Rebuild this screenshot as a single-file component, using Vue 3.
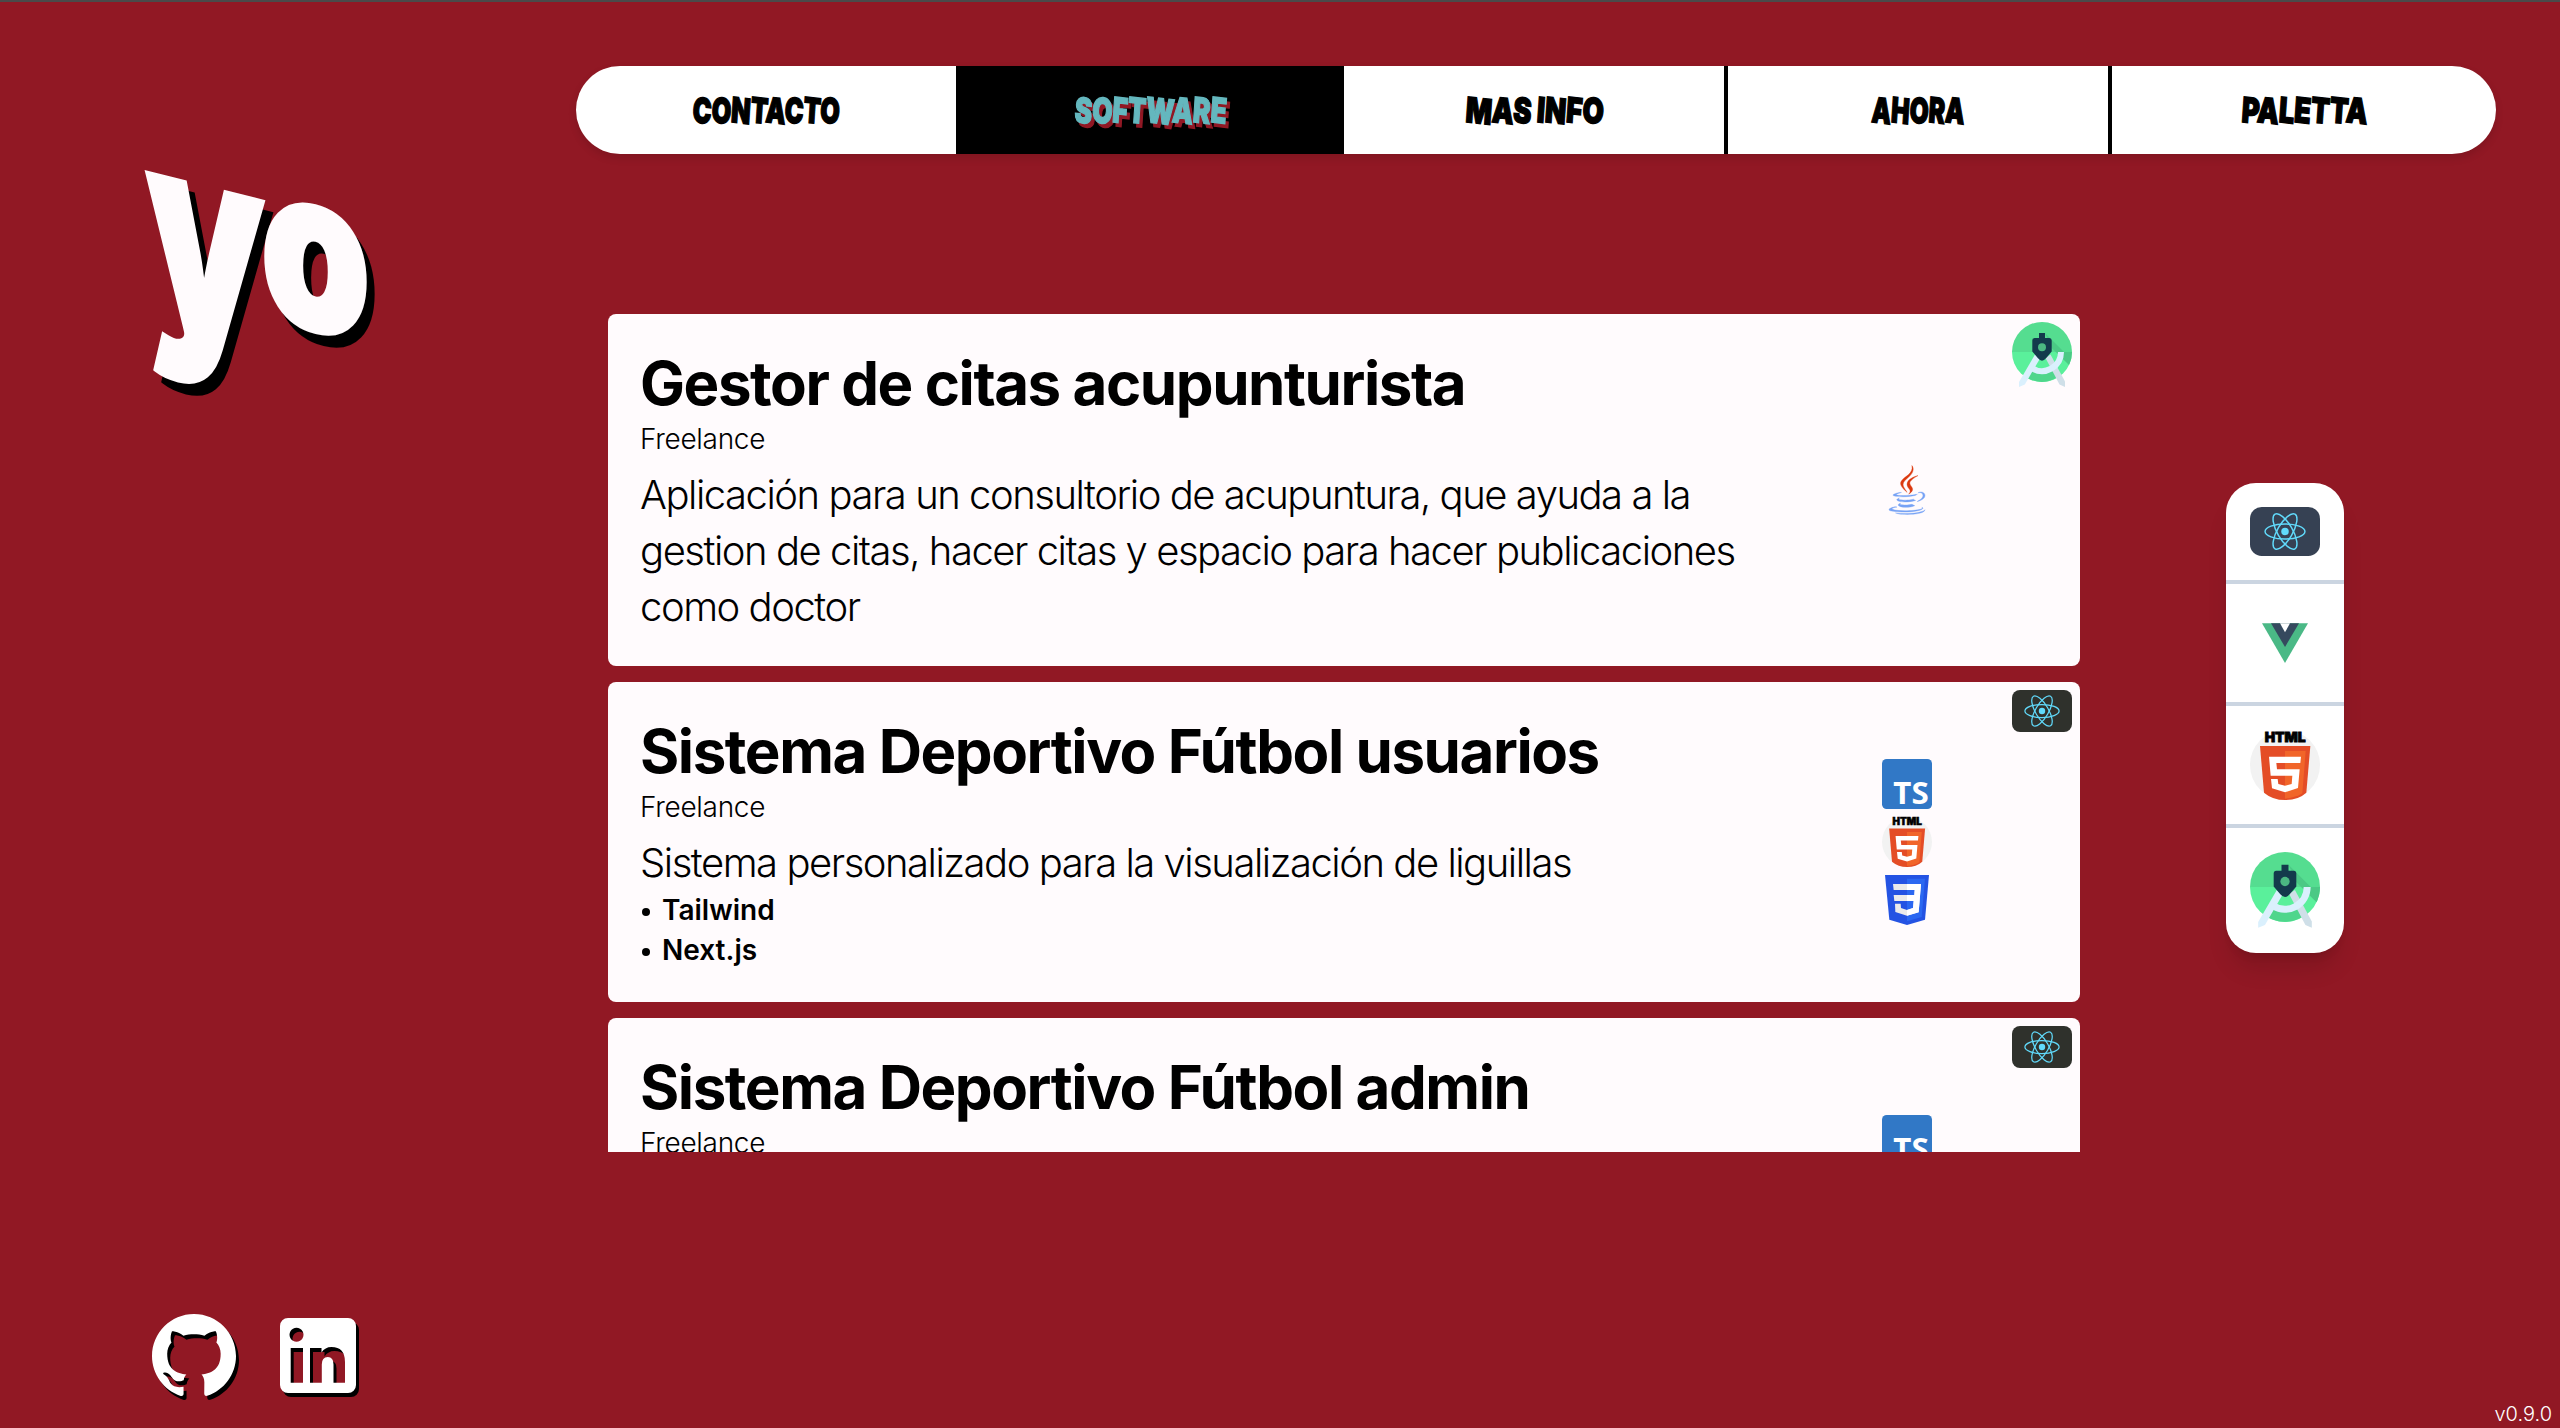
<script setup>
import { h } from 'vue'

const navItems = [
  { label: 'CONTACTO', width: 150 },
  { label: 'SOFTWARE', width: 155, active: true },
  { label: 'MAS INFO', width: 141 },
  { label: 'AHORA', width: 96 },
  { label: 'PALETTA', width: 129 },
]

const projects = [
  {
    title: 'Gestor de citas acupunturista',
    kind: 'Freelance',
    text: ['Aplicación para un consultorio de acupuntura, que ayuda a la', 'gestion de citas, hacer citas y espacio para hacer publicaciones', 'como doctor'],
    tags: [],
    badge: 'android',
    icons: ['java'],
  },
  {
    title: 'Sistema Deportivo Fútbol usuarios',
    kind: 'Freelance',
    text: ['Sistema personalizado para la visualización de liguillas'],
    tags: ['Tailwind', 'Next.js'],
    badge: 'react',
    icons: ['ts', 'html', 'css'],
  },
  {
    title: 'Sistema Deportivo Fútbol admin',
    kind: 'Freelance',
    text: [],
    tags: [],
    badge: 'react',
    icons: ['ts', 'html', 'css'],
    tall: true,
  },
]

const filters = ['react', 'vue', 'html', 'android']

const JAVA_BLUE = 'M47.617 98.12s-4.767 2.774 3.397 3.71c9.892 1.13 14.947.968 25.845-1.092 0 0 2.871 1.795 6.873 3.351-24.439 10.47-55.308-.607-36.115-5.969zM44.629 84.455s-5.348 3.959 2.823 4.805c10.567 1.091 18.91 1.18 33.354-1.6 0 0 1.993 2.025 5.132 3.131-29.542 8.64-62.446.68-41.309-6.336zM102.123 108.229s3.529 2.91-3.888 5.159c-14.102 4.272-58.706 5.56-71.094.171-4.451-1.938 3.899-4.625 6.526-5.192 2.739-.593 4.303-.485 4.303-.485-4.953-3.487-32.013 6.85-13.743 9.815 49.821 8.076 90.817-3.637 77.896-9.468zM49.912 70.294s-22.686 5.389-8.033 7.348c6.188.828 18.518.638 30.011-.326 9.39-.789 18.813-2.474 18.813-2.474s-3.308 1.419-5.704 3.053c-23.042 6.061-67.544 3.238-54.731-2.958 10.832-5.239 19.644-4.643 19.644-4.643zM90.609 93.041c23.421-12.167 12.591-23.86 5.032-22.285-1.848.385-2.677.72-2.677.72s.688-1.079 2-1.543c14.953-5.255 26.451 15.503-4.823 23.725 0-.002.359-.327.468-.617zM52.214 126.021c22.476 1.437 57-.8 57.817-11.436 0 0-1.571 4.032-18.577 7.231-19.186 3.612-42.854 3.191-56.887.874 0 .001 2.875 2.381 17.647 3.331z'
const JAVA_RED = 'M69.802 61.271c6.025 6.935-1.58 13.17-1.58 13.17s15.289-7.891 8.269-17.777c-6.559-9.215-11.587-13.792 15.635-29.58 0 .001-42.731 10.67-22.324 34.187zM76.491 1.587S89.459 14.563 64.188 34.51c-20.266 16.006-4.621 25.13-.007 35.559-11.831-10.673-20.509-20.07-14.688-28.815C58.041 28.42 81.722 22.195 76.491 1.587z'
const CSS_THREE = 'M33 27H117L110 112 75 122 40 111 39 86H56L57 99 75 105 93 99 95 78H37L35 60H97L98 45H35Z'

const path = (d, fill, stroke) => h('path', { d, fill, stroke })

const drawings = {
  android: ['0 0 60 66', () => [
    path('M0 30a30 30 0 0 1 60 0z', '#55dd90'),
    path('M60 30a30 30 0 0 1-60 0z', '#5af09b'),
    path('M33 11 52 30H60a30 30 0 0 1-3 13L39.700 26z', '#4bc985'),
    path('M18 44Q30 50 42 44L48 53.500Q30 66 12 54z', '#4fd68c'),
    path('M33.500 36 38.500 32.500 53 59.500V65L47.500 62.500z', '#cfdfe8'),
    path('M46 30H52A22 22 0 0 1 18.500 48.800L21.300 43.400A16 16 0 0 0 46 30z', '#daf0fd'),
    path('M23 32.500 28 36.500 12.800 62.500 7 65V60z', '#daf0fd'),
    path('M27 11H33V16H37.500Q39.700 16 39.700 18.500V29.500L34 36.300Q30 41 26 36.300L20.300 29.500V18.500Q20.300 16 22.500 16H27z', '#133a4c'),
    h('circle', { cx: 30, cy: 25.3, r: 4, fill: '#4bb882' }),
  ]],
  react: ['0 0 60 42', () => [
    h('rect', { class: 'react-bg', width: 60, height: 42, rx: 8 }),
    ...[0, 60, 120].map((a) => h('ellipse', { cx: 30, cy: 21, rx: 17.1, ry: 6.5, fill: 'none', stroke: '#61dafb', 'stroke-width': 1.25, transform: `rotate(${a} 30 21)` })),
    h('circle', { cx: 30, cy: 21, r: 3.2, fill: '#61dafb' }),
  ]],
  vue: ['0 0 210 210', () => [
    path('M36 46H174L105 165z', '#4ab986'),
    path('M63 46H147L105 117z', '#35495e'),
    path('M90 46H120L105 73z', '#fff'),
  ]],
  html: ['0 0 210 210', () => [
    h('circle', { cx: 105, cy: 105, r: 105, fill: '#f2f2f2' }),
    path('M30 48H181L169 188Q145 210 105 210 68 210 42 188z', '#e44d26'),
    path('M105 63H167L157 190Q137 203 105 206z', '#f16529'),
    path('M57 80H153L151 99H79L81 118H149L144 174 105 187 66 175 63 147H83L85 162 105 167 125 162 127 137H62z', '#fff'),
    h('text', { x: 44, y: 35, class: 'html-word', textLength: 123, lengthAdjust: 'spacingAndGlyphs' }, 'HTML'),
  ]],
  css: ['0 0 150 150', () => [
    path('M9 0H141L129 134 75 150 22 134z', '#2453e3'),
    path('M75 11H129L119 126 75 139z', '#2b68f1'),
    path(CSS_THREE, '#ebebeb'),
    path('M75 27H117L110 112 75 122V105L93 99 95 78H75V60H97L98 45H75z', '#fff'),
  ]],
  ts: ['0 0 150 150', () => [
    h('rect', { width: 150, height: 150, rx: 14, fill: '#3178c6' }),
    h('text', { x: 34, y: 136, class: 'ts-word', textLength: 106, lengthAdjust: 'spacingAndGlyphs' }, 'TS'),
  ]],
  java: ['0 0 128 128', () => [path(JAVA_BLUE, '#76a2f5', '#76a2f5'), path(JAVA_RED, '#db380e', '#db380e')]],
}

const TechIcon = (props) => {
  const [viewBox, draw] = drawings[props.name]
  return h('svg', { viewBox, overflow: 'visible' }, draw())
}
TechIcon.props = ['name']
</script>

<template>
  <div class="page">
    <aside class="side">
      <svg class="logo" viewBox="0 0 260 270">
        <g transform="translate(16 20) skewY(14)">
          <g class="logo-shadow" transform="translate(8 10)" aria-hidden="true">
            <text class="logo-text logo-y" x="0" y="147" textLength="118" lengthAdjust="spacingAndGlyphs">y</text>
            <text class="logo-text logo-o" x="115" y="117" textLength="109" lengthAdjust="spacingAndGlyphs">o</text>
          </g>
          <text class="logo-text logo-y" x="0" y="147" textLength="118" lengthAdjust="spacingAndGlyphs">y</text>
          <text class="logo-text logo-o" x="115" y="117" textLength="109" lengthAdjust="spacingAndGlyphs">o</text>
        </g>
      </svg>
      <div class="social">
        <svg class="github" viewBox="0 0 24 24">
          <path fill="#fff" d="M12 .297c-6.63 0-12 5.373-12 12 0 5.303 3.438 9.8 8.205 11.385.6.113.82-.258.82-.577 0-.285-.01-1.04-.015-2.040-3.338.724-4.042-1.610-4.042-1.610C4.422 18.070 3.633 17.700 3.633 17.700c-1.087-.744.084-.729.084-.729 1.205.084 1.838 1.236 1.838 1.236 1.070 1.835 2.809 1.305 3.495.998.108-.776.417-1.305.760-1.605-2.665-.3-5.466-1.332-5.466-5.930 0-1.310.465-2.380 1.235-3.220-.135-.303-.540-1.523.105-3.176 0 0 1.005-.322 3.300 1.230.960-.267 1.980-.399 3-.405 1.020.006 2.040.138 3 .405 2.280-1.552 3.285-1.230 3.285-1.230.645 1.653.240 2.873.120 3.176.765.840 1.230 1.910 1.230 3.220 0 4.610-2.805 5.625-5.475 5.920.420.360.810 1.096.810 2.220 0 1.606-.015 2.896-.015 3.286 0 .315.210.690.825.570C20.565 22.092 24 17.592 24 12.297c0-6.627-5.373-12-12-12" />
        </svg>
        <svg class="linkedin" viewBox="0 0 76 75">
          <path fill="#fff" fill-rule="evenodd" d="M8 0H68a8 8 0 0 1 8 8V67a8 8 0 0 1-8 8H8a8 8 0 0 1-8-8V8a8 8 0 0 1 8-8zM16.500 9.700a7 7 0 1 0 .010 0zM10.700 30H23V64.700H10.700zM30 30H41.500V34.500Q45 29 51.500 29 65 29 65 44V64.700H53.500V46.500Q53.500 39 47.800 39 41.800 39 41.800 46.500V64.700H30z" />
        </svg>
      </div>
    </aside>

    <main class="main">
      <nav class="nav">
        <a v-for="item in navItems" :key="item.label" class="nav-item" :class="{ active: item.active }">
          <svg class="nav-label" :viewBox="`0 0 ${item.width} 40`" :style="{ width: item.width + 'px' }">
            <text x="1" y="32" rotate="5" :textLength="item.width - 3" lengthAdjust="spacingAndGlyphs">{{ item.label }}</text>
          </svg>
        </a>
      </nav>

      <div class="content">
        <section class="list">
          <article v-for="p in projects" :key="p.title" class="card" :class="{ tall: p.tall }">
            <div class="info">
              <h2>{{ p.title }}</h2>
              <p class="kind">{{ p.kind }}</p>
              <p class="text"><span v-for="line in p.text" :key="line">{{ line }}</span></p>
              <ul class="tags">
                <li v-for="t in p.tags" :key="t">{{ t }}</li>
              </ul>
            </div>
            <div class="stack">
              <TechIcon v-for="i in p.icons" :key="i" :name="i" class="stack-icon" />
            </div>
            <TechIcon :name="p.badge" class="badge" />
          </article>
        </section>

        <div class="filters">
          <div v-for="f in filters" :key="f" class="filter">
            <TechIcon :name="f" class="filter-icon" />
          </div>
        </div>
      </div>
    </main>
    <span class="version">v0.9.0</span>
  </div>
</template>

<style>
body {
  margin: 0;
  background: #911824;
}
.react-bg {
  fill: #2f312c;
}
.filters .react-bg {
  fill: #364153;
  rx: 10px;
}
.html-word {
  font: 900 41px Inter, sans-serif;
  stroke: #000;
  stroke-width: 2.5px;
}
.ts-word {
  font: 700 92px "Noto Sans", sans-serif;
  fill: #fff;
}
</style>

<style scoped>
.page {
  box-sizing: border-box;
  position: relative;
  display: flex;
  width: 2560px;
  height: 1428px;
  overflow: hidden;
  border-top: 2px solid #4a4a4a;
  background: #911824;
  color: #000;
  font-family: Inter, "Noto Sans", sans-serif;
}
.side {
  display: flex;
  flex-direction: column;
  justify-content: space-between;
  width: 576px;
  box-sizing: border-box;
  padding: 148px 0 28px 130px;
}
.logo {
  width: 260px;
  height: 270px;
  overflow: visible;
}
.logo-text {
  font-family: Inter, sans-serif;
  font-weight: 900;
  fill: #fffbfd;
  stroke: #fffbfd;
  stroke-width: 5px;
}
.logo-y {
  font-size: 264px;
}
.logo-o {
  font-size: 222px;
}
.logo-shadow .logo-text {
  fill: #000;
  stroke: #000;
}
.social {
  display: flex;
  align-items: center;
  gap: 44px;
  height: 90px;
  padding-left: 22px;
}
.social svg {
  overflow: visible;
  filter: drop-shadow(3.500px 4px 0 #000);
}
.github {
  width: 84px;
  height: 84px;
}
.linkedin {
  width: 76px;
  height: 75px;
}
.main {
  display: flex;
  flex-direction: column;
  width: 1920px;
  padding-top: 64px;
}
.nav {
  display: flex;
  height: 88px;
  border-radius: 44px;
  overflow: hidden;
  background: #fff;
  box-shadow: 0 4px 8px rgba(0, 0, 0, 0.12);
}
.nav-item {
  box-sizing: border-box;
  display: flex;
  flex: none;
  width: 20%;
  align-items: center;
  justify-content: center;
  border-right: 4px solid #000;
}
.nav-item:first-child {
  border-right-width: 4px;
}
.nav-item:last-child {
  border-right: 0;
}
.nav-item.active {
  background: #000;
}
.nav-label {
  height: 40px;
  overflow: visible;
  font: 900 35px Inter, sans-serif;
  stroke: #000;
  stroke-width: 1.4px;
}
.active .nav-label {
  fill: #64b7be;
  stroke: #64b7be;
  filter: drop-shadow(3px 4px 0 #911824);
}
.content {
  display: flex;
  align-items: flex-start;
  padding: 160px 0 0 32px;
}
.list {
  display: flex;
  flex-direction: column;
  gap: 16px;
  width: 1472px;
  height: 838px;
  overflow: hidden;
}
.card {
  position: relative;
  box-sizing: border-box;
  display: grid;
  flex: none;
  grid-template-columns: minmax(0, 4fr) minmax(0, 1fr);
  padding: 32px;
  border-radius: 8px;
  background: #fffbfd;
}
.card.tall {
  height: 360px;
}
h2,
p,
ul {
  margin: 0;
  padding: 0;
}
h2 {
  font-size: 60px;
  font-weight: 700;
  line-height: 74px;
  letter-spacing: -1.43px;
  white-space: nowrap;
}
.kind {
  font-size: 28px;
  font-weight: 300;
  line-height: 38px;
  letter-spacing: -0.3px;
}
.text {
  margin-top: 8px;
  padding-top: 1px;
  margin-bottom: -1px;
  font-size: 40px;
  font-weight: 300;
  line-height: 56px;
  letter-spacing: -1.47px;
}
.text span {
  display: block;
  white-space: nowrap;
}
.tags {
  list-style: none;
  font-size: 28px;
  font-weight: 600;
  line-height: 40px;
}
.tags li {
  display: flex;
  align-items: center;
}
.tags li::before {
  width: 8px;
  height: 8px;
  margin: 3px 12px 0 2px;
  border-radius: 50%;
  background: #000;
  content: "";
}
.stack {
  display: flex;
  flex-direction: column;
  align-items: center;
  justify-content: center;
  gap: 8px;
}
.stack-icon {
  width: 50px;
  height: 50px;
}
.badge {
  position: absolute;
  top: 8px;
  right: 8px;
  width: 60px;
}
.filters {
  width: 118px;
  margin: 169px 0 0 146px;
  border-radius: 30px;
  background: #fff;
  box-shadow: 0 20px 25px -5px rgba(0, 0, 0, 0.12), 0 8px 10px -6px rgba(0, 0, 0, 0.12);
}
.filter {
  display: flex;
  padding: 24px;
  border-bottom: 4px solid #cbd5e1;
}
.filter:last-child {
  border-bottom: 0;
}
.filter-icon {
  width: 70px;
}
.version {
  position: absolute;
  right: 8px;
  bottom: 0;
  color: #fff;
  font-size: 20px;
  font-weight: 300;
  line-height: 28px;
}
</style>
